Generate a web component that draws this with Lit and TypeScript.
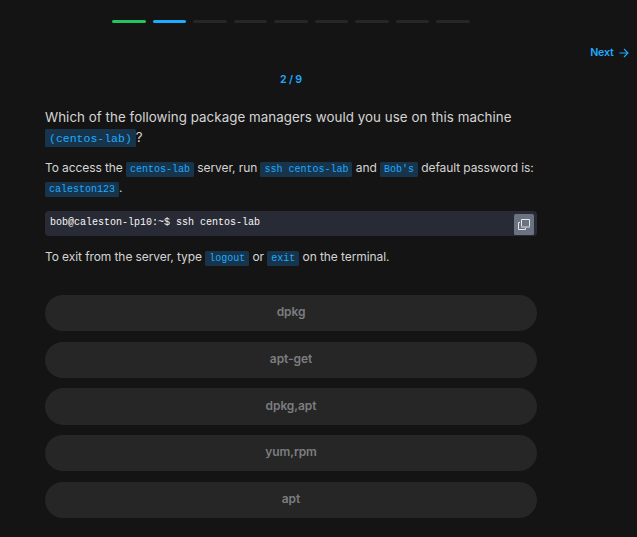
import { LitElement, html, css } from "lit";
import { customElement, property, state } from "lit/decorators.js";
import { classMap } from "lit/directives/class-map.js";

@customElement("quiz-progress")
class QuizProgress extends LitElement {
  @property({ type: Number }) total = 9;
  @property({ type: Number }) current = 2;

  static styles = css`
    :host {
      display: grid;
      grid-template-columns: repeat(9, 1fr);
      column-gap: 6.8px;
      width: 358px;
      height: 3px;
    }
    .step {
      border-radius: 1.5px;
      background: #262626;
    }
    .done {
      background: #22c55e;
    }
    .active {
      background: #1eaaff;
    }
  `;

  render() {
    return Array.from({ length: this.total }, (_, i) => {
      const n = i + 1;
      return html`<div
        class=${classMap({ step: true, done: n < this.current, active: n === this.current })}
      ></div>`;
    });
  }
}

@customElement("app-root")
class AppRoot extends LitElement {
  @state() private options = ["dpkg", "apt-get", "dpkg,apt", "yum,rpm", "apt"];

  static styles = css`
    :host {
      display: block;
      box-sizing: border-box;
      height: 537px;
      overflow: hidden;
      padding-top: 20px;
      background: #141414;
      color: #d4d4d4;
      font-family: Inter, "Liberation Sans", sans-serif;
    }
    .progress {
      margin-left: 112px;
    }
    .nav {
      display: flex;
      justify-content: flex-end;
      align-items: center;
      gap: 5px;
      height: 16px;
      margin-top: 21px;
      padding-right: 8.5px;
      color: #1eaaff;
      font-size: 10.67px;
      font-weight: 600;
      letter-spacing: -0.2px;
    }
    .arrow {
      width: 10px;
      height: 10px;
      margin-top: 1px;
    }
    main {
      width: 492px;
      margin-left: 45px;
    }
    .count {
      margin-top: 12px;
      color: #1eaaff;
      font-size: 10.67px;
      font-weight: 600;
      letter-spacing: -0.2px;
      line-height: 16px;
      text-align: center;
    }
    .question {
      margin: 18.5px 0 0;
      font-size: 13.33px;
      font-weight: 400;
      letter-spacing: 0.05px;
      line-height: 20px;
    }
    p {
      margin: 0;
      font-size: 12px;
      letter-spacing: -0.09px;
      line-height: 19.5px;
    }
    .access {
      margin-top: 11.75px;
    }
    .exit {
      margin-top: 11.25px;
    }
    code,
    pre {
      font-family: "Liberation Mono", monospace;
      letter-spacing: 0;
    }
    code {
      padding: 2px 4px;
      border-radius: 1.5px;
      background: #17344a;
      color: #1eaaff;
      font-size: 10px;
      line-height: 1;
    }
    .question code {
      padding: 2.5px 4px;
      font-size: 11.5px;
    }
    .terminal {
      display: flex;
      justify-content: space-between;
      box-sizing: border-box;
      height: 25px;
      margin-top: 13.75px;
      padding: 3px 3px 1px 5px;
      border-radius: 4px;
      background: #282a36;
    }
    pre {
      margin: 0;
      color: #f8f8f2;
      font-size: 10px;
      line-height: 17px;
    }
    .copy {
      display: flex;
      align-items: center;
      justify-content: center;
      width: 20px;
      height: 21px;
      border: 0;
      border-radius: 1.5px;
      padding: 0;
      background: #6b7280;
    }
    .copy svg {
      width: 12px;
      height: 11px;
    }
    .options {
      display: grid;
      gap: 10.3px;
      margin-top: 28.25px;
    }
    .option {
      height: 36.4px;
      border: 0;
      border-radius: 19px;
      padding: 0 0 3px;
      background: #262626;
      color: #7c7d80;
      font: 600 12px Inter, "Liberation Sans", sans-serif;
      letter-spacing: -0.08px;
    }
  `;

  render() {
    return html`
      <quiz-progress class="progress" .total=${9} .current=${2}></quiz-progress>
      <div class="nav">
        <span>Next</span>
        <svg class="arrow" viewBox="0 0 10 10" fill="none" stroke="currentColor" stroke-width="1.1">
          <path d="M0.5 5H9M5 1L9 5L5 9" />
        </svg>
      </div>
      <main>
        <div class="count">2 / 9</div>
        <h1 class="question">
          Which of the following package managers would you use on this machine
          <code>(centos-lab)</code>?
        </h1>
        <p class="access">
          To access the <code>centos-lab</code> server, run <code>ssh centos-lab</code> and
          <code>Bob's</code> default password is: <code>caleston123</code>.
        </p>
        <div class="terminal">
          <pre>bob@caleston-lp10:~$ ssh centos-lab</pre>
          <button class="copy" aria-label="Copy">
            <svg viewBox="0 0 12 11" fill="none" stroke="#e5e7eb">
              <path d="M3.5 7.5V0.5H11.5V7.5" />
              <path d="M3 8H12" stroke="#b4b9c1" stroke-width="1.6" />
              <path d="M2 3.5H0.5V10.5H7.5V9" />
            </svg>
          </button>
        </div>
        <p class="exit">
          To exit from the server, type <code>logout</code> or <code>exit</code> on the terminal.
        </p>
        <div class="options">
          ${this.options.map((label) => html`<button class="option">${label}</button>`)}
        </div>
      </main>
    `;
  }
}
